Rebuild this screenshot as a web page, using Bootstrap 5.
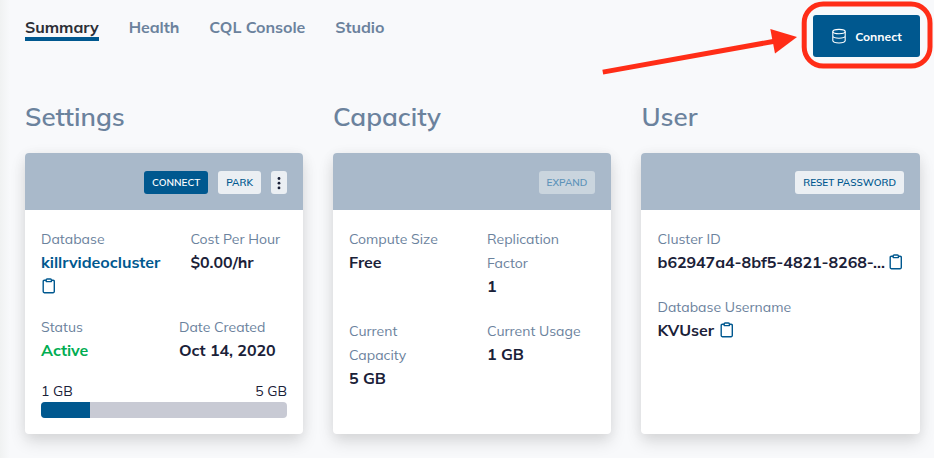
<!DOCTYPE html>
<html lang="en">
<head>
<meta charset="utf-8">
<meta name="viewport" content="width=device-width, initial-scale=1">
<title>Database summary</title>
<link rel="stylesheet" href="https://cdn.jsdelivr.net/npm/bootstrap@5.3.0/dist/css/bootstrap.min.css">
<style>
  :root { --blue: #00588f; --slate: #6b829d; --ink: #1a2138; }
  body { font-family: Mulish, Muli, Lato, "Open Sans", sans-serif; background: #f8f9fb; color: var(--ink); height: 458px; overflow: hidden; position: relative; }
  .page { padding: 15px 14px 0 25px; height: 458px; background: linear-gradient(90deg, #f0f2f2, #f8f9fb 10px); }
  .topbar { height: 84px; }
  .tabs { gap: 30px; }
  .tabs .nav-link { padding: 0; font-size: 16px; line-height: 24px; font-weight: 700; letter-spacing: -.05px; color: var(--slate); white-space: nowrap; }
  .tabs .nav-link.active { color: #2c2f36; border-bottom: 4px solid var(--blue); line-height: 22px; padding-top: 1px; height: 26px; }
  .btn-connect { width: 107px; height: 42px; background: var(--blue); color: #fff; border: 0; border-radius: 3px; font-size: 12px; font-weight: 700; padding: 2px 0 0; }
  .btn-connect svg { margin-top: -2px; }
  .panels { display: grid; grid-template-columns: 278px 278px 279px; gap: 30px; }
  .panel-title { font-size: 26px; line-height: 36px; font-weight: 600; color: var(--slate); margin: 0 0 18px; }
  .panel-title.user { padding-left: .5px; }
  .panel { height: 281px; border: 0; border-radius: 4px; box-shadow: 0 8px 16px rgba(0,0,0,.12), 0 1px 14px rgba(0,0,0,.05); }
  .panel-head { height: 57px; background: #a9b9ca; border-radius: 4px 4px 0 0; padding: 2px 16px 0; gap: 10px; }
  .btn-mini { height: 23px; border: 0; border-radius: 3px; padding: 0 8px; font-size: 10px; line-height: 23px; font-weight: 600; background: #ebeff3; color: var(--blue); white-space: nowrap; }
  .btn-mini.solid { background: var(--blue); color: #fff; }
  .btn-mini.off { background: #cad5de; color: #5d93b9; width: 56px; padding: 0; }
  .btn-mini.dots { width: 16px; padding: 0; }
  .panel-body { padding: 17px 16px 0; }
  .panel-body.user { padding-left: 16.5px; }
  .pair { display: grid; grid-template-columns: 138px 1fr; margin-bottom: 21px; }
  .pair.wide { grid-template-columns: 149.5px 1fr; margin-bottom: 17px; }
  .pair.last { margin-bottom: 19px; }
  .lbl { font-size: 14px; line-height: 24px; color: var(--slate); }
  .val { font-size: 16px; line-height: 24px; font-weight: 700; letter-spacing: -.04px; white-space: nowrap; margin-top: -1px; }
  .val.name { color: var(--blue); }
  .val.ok { color: #00ad52; }
  .copy-icon { height: 24px; padding: 4px 0 0 1px; }
  .copy-icon svg { display: block; }
  .val-id { margin-bottom: 21px; gap: 4px; }
  .val-user { gap: 6px; }
  .scale-text { font-size: 14px; line-height: 21px; }
  .usage { height: 16px; border-radius: 4px; background: #c8cad4; }
  .usage .progress-bar { background: var(--blue); }
  .callout-mark { position: absolute; left: 0; top: 0; pointer-events: none; }
</style>
</head>
<body>
<svg class="d-none"><defs>
  <symbol id="clip" viewBox="0 0 14 16"><path d="M4 2.3H2.3Q1.2 2.3 1.2 3.4V13.6Q1.2 14.7 2.3 14.7H11.2Q12.3 14.7 12.3 13.6V3.4Q12.3 2.3 11.2 2.3H9.6M4.2 1.9Q4.2 1 5.1 1H8.5Q9.4 1 9.4 1.9V3.6H4.2Z" fill="none" stroke="#00588f" stroke-width="1.4" stroke-linejoin="round"/></symbol>
</defs></svg>
<main class="page">
  <header class="topbar d-flex justify-content-between align-items-start">
    <nav class="nav tabs flex-nowrap">
      <a class="nav-link active" href="#">Summary</a>
      <a class="nav-link" href="#">Health</a>
      <a class="nav-link" href="#">CQL Console</a>
      <a class="nav-link" href="#">Studio</a>
    </nav>
    <button class="btn btn-connect d-flex align-items-center justify-content-center gap-2">
      <svg width="16" height="17" viewBox="0 0 16 17" fill="none" stroke="#fff" stroke-width="1.1"><ellipse cx="8" cy="3.6" rx="6.2" ry="2.2"/><path d="M1.8 3.6V12.7Q2.3 15 8 15T14.2 12.7V3.6M1.8 8.2Q2.3 10.2 8 10.2T14.2 8.2"/></svg>
      <span>Connect</span>
    </button>
  </header>
  <div class="panels">
    <section>
      <h2 class="panel-title">Settings</h2>
      <div class="card panel">
        <div class="panel-head d-flex align-items-center justify-content-end">
          <button class="btn btn-mini solid">CONNECT</button>
          <button class="btn btn-mini">PARK</button>
          <button class="btn btn-mini dots d-flex align-items-center justify-content-center"><svg width="4" height="14" viewBox="0 0 4 14" fill="#1a2138"><circle cx="2" cy="2.5" r="1.4"/><circle cx="2" cy="7.2" r="1.4"/><circle cx="2" cy="11.9" r="1.4"/></svg></button>
        </div>
        <div class="panel-body">
          <div class="pair wide">
            <div><div class="lbl">Database</div><div class="val name">killrvideocluster</div><div class="copy-icon"><svg width="14" height="16"><use href="#clip"/></svg></div></div>
            <div><div class="lbl">Cost Per Hour</div><div class="val">$0.00/hr</div></div>
          </div>
          <div class="pair last">
            <div><div class="lbl">Status</div><div class="val ok">Active</div></div>
            <div><div class="lbl">Date Created</div><div class="val">Oct 14, 2020</div></div>
          </div>
          <div class="d-flex justify-content-between scale-text"><span>1 GB</span><span>5 GB</span></div>
          <div class="progress usage"><div class="progress-bar" style="width:20%"></div></div>
        </div>
      </div>
    </section>
    <section>
      <h2 class="panel-title">Capacity</h2>
      <div class="card panel">
        <div class="panel-head d-flex align-items-center justify-content-end"><button class="btn btn-mini off">EXPAND</button></div>
        <div class="panel-body">
          <div class="pair">
            <div><div class="lbl">Compute Size</div><div class="val">Free</div></div>
            <div><div class="lbl">Replication<br>Factor</div><div class="val">1</div></div>
          </div>
          <div class="pair">
            <div><div class="lbl">Current<br>Capacity</div><div class="val">5 GB</div></div>
            <div><div class="lbl">Current Usage</div><div class="val">1 GB</div></div>
          </div>
        </div>
      </div>
    </section>
    <section>
      <h2 class="panel-title user">User</h2>
      <div class="card panel">
        <div class="panel-head d-flex align-items-center justify-content-end"><button class="btn btn-mini">RESET PASSWORD</button></div>
        <div class="panel-body user">
          <div class="lbl">Cluster ID</div>
          <div class="val val-id d-flex align-items-center"><span>b62947a4-8bf5-4821-8268-...</span><svg width="14" height="16"><use href="#clip"/></svg></div>
          <div class="lbl">Database Username</div>
          <div class="val val-user d-flex align-items-center"><span>KVUser</span><svg width="14" height="16"><use href="#clip"/></svg></div>
        </div>
      </div>
    </section>
  </div>
</main>
<svg class="callout-mark" width="934" height="100" viewBox="0 0 934 100">
  <rect x="804.2" y="3.9" width="125.8" height="62.2" rx="19" fill="none" stroke="#ff2d17" stroke-width="5"/>
  <path d="M602.8 72.1L776 41" stroke="#ff2d17" stroke-width="5"/>
  <path d="M770.3 29L797 37L775 53.5Z" fill="#ff2d17"/>
</svg>
<script src="https://cdn.jsdelivr.net/npm/bootstrap@5.3.0/dist/js/bootstrap.bundle.min.js"></script>
</body>
</html>
